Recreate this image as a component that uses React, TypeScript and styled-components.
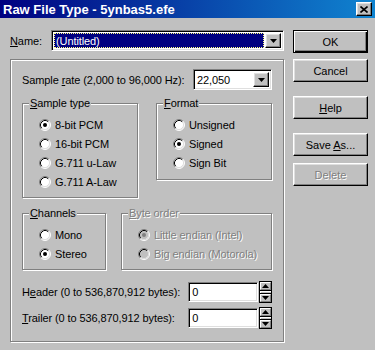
import React from "react";
import styled, { createGlobalStyle, css } from "styled-components";

const GlobalStyle = createGlobalStyle`
  html, body { margin: 0; padding: 0; background: #c0c0c0; }
  body {
    font-family: "Liberation Sans", Arial, sans-serif;
    font-size: 11px;
    letter-spacing: -0.1px;
    color: #000;
  }
`;

const raised = css`
  background: #c0c0c0;
  border: 1px solid;
  border-color: #fff #000 #000 #fff;
  box-shadow: inset -1px -1px 0 #808080, inset 1px 1px 0 #dfdfdf;
`;

const sunken = css`
  background: #fff;
  border: 1px solid;
  border-color: #808080 #fff #fff #808080;
  box-shadow: inset 1px 1px 0 #000, inset -1px -1px 0 #dfdfdf;
`;

const Radio = ({ checked, disabled }: { checked?: boolean; disabled?: boolean }) => (
  <svg width="12" height="12" viewBox="0 0 12 12">
    <circle cx="6" cy="6" r="5" fill={disabled ? "#c0c0c0" : "#fff"} />
    <path d="M2.11 9.89 A5.5 5.5 0 0 1 9.89 2.11" stroke="#808080" fill="none" />
    <path d="M9.89 2.11 A5.5 5.5 0 0 1 2.11 9.89" stroke="#fff" fill="none" />
    <path d="M2.82 9.18 A4.5 4.5 0 0 1 9.18 2.82" stroke="#000" fill="none" />
    <path d="M9.18 2.82 A4.5 4.5 0 0 1 2.82 9.18" stroke="#dfdfdf" fill="none" />
    {checked && <circle cx="6" cy="6" r="2" fill={disabled ? "#808080" : "#000"} />}
  </svg>
);

const Arrow = ({ up }: { up?: boolean }) => (
  <svg width="7" height="4" viewBox="0 0 7 4">
    <path d={up ? "M3.5 0 L7 4 L0 4 Z" : "M0 0 L7 0 L3.5 4 Z"} fill="#000" />
  </svg>
);

const App = () => {
  return (
    <Win>
      <GlobalStyle />
      <TitleBar>
        <span>Raw File Type - 5ynbas5.efe</span>
        <CloseBtn>
          <svg width="8" height="7" viewBox="0 0 8 7">
            <path d="M0.5 0.5 L7.5 6.5 M7.5 0.5 L0.5 6.5" stroke="#000" strokeWidth="1.6" />
          </svg>
        </CloseBtn>
      </TitleBar>
      <Body>
        <LeftCol>
          <NameRow>
            <NameLabel><u>N</u>ame:</NameLabel>
            <Combo $width={233}>
              <ComboField>
                <Selected>(Untitled)</Selected>
              </ComboField>
              <DropBtn><Arrow /></DropBtn>
            </Combo>
          </NameRow>
          <MainBox>
            <RateRow>
              <span>Sample <u>r</u>ate (2,000 to 96,000 Hz):</span>
              <Combo $width={79}>
                <ComboField><FieldText>22,050</FieldText></ComboField>
                <DropBtn><Arrow /></DropBtn>
              </Combo>
            </RateRow>
            <GroupRow $mt={13}>
              <Group $width={116}>
                <GroupTitle><u>S</u>ample type</GroupTitle>
                <Options $pb={6}>
                  <Option><Radio checked />8-bit PCM</Option>
                  <Option><Radio />16-bit PCM</Option>
                  <Option><Radio />G.711 u-Law</Option>
                  <Option><Radio />G.711 A-Law</Option>
                </Options>
              </Group>
              <Group $width={116}>
                <GroupTitle><u>F</u>ormat</GroupTitle>
                <Options $pb={7}>
                  <Option><Radio />Unsigned</Option>
                  <Option><Radio checked />Signed</Option>
                  <Option><Radio />Sign Bit</Option>
                </Options>
              </Group>
            </GroupRow>
            <GroupRow $mt={15}>
              <Group $width={84}>
                <GroupTitle><u>C</u>hannels</GroupTitle>
                <Options $pb={6}>
                  <Option><Radio />Mono</Option>
                  <Option><Radio checked />Stereo</Option>
                </Options>
              </Group>
              <Group $width={151}>
                <GroupTitle $disabled><u>B</u>yte order</GroupTitle>
                <Options $pb={6}>
                  <Option $disabled><Radio checked disabled />Little endian (Intel)</Option>
                  <Option $disabled><Radio disabled />Big endian (Motorola)</Option>
                </Options>
              </Group>
            </GroupRow>
            <SizeRow $mt={11}>
              <SizeLabel>H<u>e</u>ader (0 to 536,870,912 bytes):</SizeLabel>
              <NumField><FieldText>0</FieldText></NumField>
              <Spin>
                <SpinBtn><Arrow up /></SpinBtn>
                <SpinMid />
                <SpinBtn><Arrow /></SpinBtn>
              </Spin>
            </SizeRow>
            <SizeRow $mt={4}>
              <SizeLabel><u>T</u>railer (0 to 536,870,912 bytes):</SizeLabel>
              <NumField><FieldText>0</FieldText></NumField>
              <Spin>
                <SpinBtn><Arrow up /></SpinBtn>
                <SpinMid />
                <SpinBtn><Arrow /></SpinBtn>
              </Spin>
            </SizeRow>
          </MainBox>
        </LeftCol>
        <RightCol>
          <Button $default $mt={0}>OK</Button>
          <Button $mt={6}>Cancel</Button>
          <Button $mt={14}><u>H</u>elp</Button>
          <Button $mt={14}>Save <u>A</u>s...</Button>
          <Button $mt={7} disabled>Delete</Button>
        </RightCol>
      </Body>
    </Win>
  );
};

export default App;

const Win = styled.div`
  width: 375px;
  height: 350px;
  background: #c0c0c0;
  overflow: hidden;
`;

const TitleBar = styled.div`
  height: 18px;
  padding: 0 3px 0 3px;
  display: flex;
  align-items: center;
  justify-content: space-between;
  background: linear-gradient(to right, #000080, #1084d0);
  color: #fff;
  font-weight: bold;
  font-size: 13px;
  letter-spacing: 0;
`;

const CloseBtn = styled.div`
  ${raised};
  width: 16px;
  height: 14px;
  box-sizing: border-box;
  display: flex;
  align-items: center;
  justify-content: center;
`;

const Body = styled.div`
  display: flex;
  gap: 8px;
  padding: 12px 0 0 10px;
`;

const LeftCol = styled.div`
  width: 275px;
  display: flex;
  flex-direction: column;
`;

const NameRow = styled.div`
  display: flex;
  align-items: center;
  height: 21px;
`;

const NameLabel = styled.span`
  width: 41px;
`;

const Combo = styled.div<{ $width: number }>`
  ${sunken};
  width: ${p => p.$width}px;
  height: 21px;
  box-sizing: border-box;
  padding: 2px;
  display: flex;
  align-items: stretch;
`;

const ComboField = styled.div`
  flex: 1;
  display: flex;
  align-items: center;
  min-width: 0;
`;

const Selected = styled.div`
  flex: 1;
  align-self: stretch;
  margin-right: 1px;
  background: #000080;
  color: #fff;
  border: 1px dotted #ffff80;
  display: flex;
  align-items: center;
  padding-left: 1px;
`;

const FieldText = styled.span`
  padding-left: 1px;
`;

const DropBtn = styled.div`
  ${raised};
  width: 16px;
  box-sizing: border-box;
  display: flex;
  align-items: center;
  justify-content: center;
`;

const MainBox = styled.div`
  margin-top: 8px;
  width: 274px;
  height: 283px;
  box-sizing: border-box;
  border: 1px solid #808080;
  box-shadow: 1px 1px 0 #fff, inset 1px 1px 0 #fff;
  padding: 9px 11px 0 11px;
  display: flex;
  flex-direction: column;
`;

const RateRow = styled.div`
  display: flex;
  align-items: center;
  justify-content: space-between;
  height: 21px;
`;

const GroupRow = styled.div<{ $mt: number }>`
  margin-top: ${p => p.$mt}px;
  display: flex;
  align-items: flex-start;
  justify-content: space-between;
`;

const Group = styled.div<{ $width: number }>`
  position: relative;
  width: ${p => p.$width}px;
  box-sizing: border-box;
  border: 1px solid #808080;
  box-shadow: 1px 1px 0 #fff, inset 1px 1px 0 #fff;
  padding-left: 16px;
`;

const GroupTitle = styled.span<{ $disabled?: boolean }>`
  position: absolute;
  top: -8px;
  left: 6px;
  padding: 0 1px;
  line-height: 14px;
  background: #c0c0c0;
  color: ${p => (p.$disabled ? "#808080" : "#000")};
  text-shadow: ${p => (p.$disabled ? "1px 1px 0 #fff" : "none")};
`;

const Options = styled.div<{ $pb: number }>`
  padding-top: 11px;
  padding-bottom: ${p => p.$pb}px;
  display: flex;
  flex-direction: column;
`;

const Option = styled.div<{ $disabled?: boolean }>`
  height: 19px;
  display: flex;
  align-items: center;
  gap: 4px;
  white-space: nowrap;
  color: ${p => (p.$disabled ? "#808080" : "#000")};
  text-shadow: ${p => (p.$disabled ? "1px 1px 0 #fff" : "none")};
`;

const SizeRow = styled.div<{ $mt: number }>`
  margin-top: ${p => p.$mt}px;
  height: 22px;
  display: flex;
  align-items: center;
`;

const SizeLabel = styled.span`
  width: 167px;
  white-space: nowrap;
`;

const NumField = styled.div`
  ${sunken};
  width: 70px;
  height: 20px;
  box-sizing: border-box;
  padding: 2px;
  display: flex;
  align-items: center;
`;

const Spin = styled.div`
  margin-left: 1px;
  width: 13px;
  height: 22px;
  box-sizing: border-box;
  border: 1px solid #000;
  display: flex;
  flex-direction: column;
  background: #c0c0c0;
`;

const SpinBtn = styled.div`
  height: 8px;
  box-sizing: border-box;
  border: 1px solid;
  border-color: #fff #808080 #808080 #fff;
  display: flex;
  align-items: center;
  justify-content: center;
`;

const SpinMid = styled.div`
  flex: 1;
  border-top: 1px solid #000;
  border-bottom: 1px solid #000;
  box-shadow: inset 1px 1px 0 #fff;
`;

const RightCol = styled.div`
  display: flex;
  flex-direction: column;
`;

const Button = styled.button<{ $default?: boolean; $mt: number }>`
  ${raised};
  margin: ${p => p.$mt}px 0 0 0;
  width: 75px;
  height: 23px;
  padding: 0;
  font-family: "Liberation Sans", Arial, sans-serif;
  font-size: 11px;
  color: #000;
  ${p =>
    p.$default &&
    css`
      border: 1px solid #000;
      box-shadow: inset 1px 1px 0 #fff, inset -1px -1px 0 #000, inset -2px -2px 0 #808080;
    `}
  &:disabled {
    color: #808080;
    text-shadow: 1px 1px 0 #fff;
  }
`;
